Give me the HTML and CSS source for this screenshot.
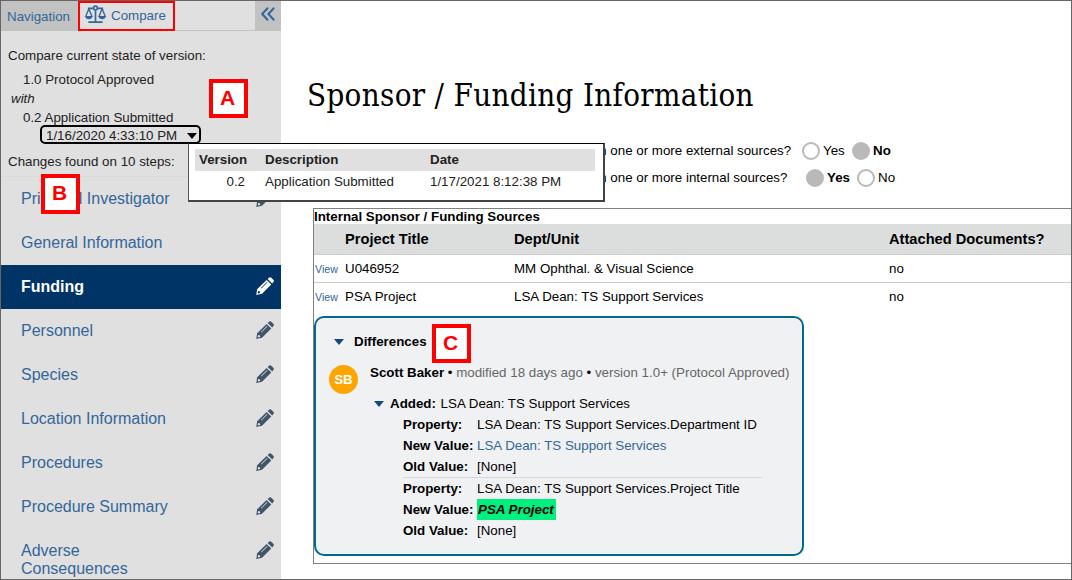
FILE: index.html
```html
<!DOCTYPE html>
<html lang="en">
<head>
    <meta charset="UTF-8">
    <meta name="viewport" content="width=device-width, initial-scale=1.0">
    <title>Sponsor / Funding Information</title>
    <link rel="stylesheet" href="styles.css">
</head>
<body>
    <!-- Shared icons -->
    <svg class="icon-defs" width="0" height="0">
        <symbol id="pencil" viewBox="0 0 18 18">
            <path fill-rule="evenodd" d="M10.6 2.9L15.3 7.4L6 16.8L.3 18L1.1 12.3ZM2.3 14L1.7 15.7L2.6 16.4L4.2 15.7L4 14.4L2.7 14ZM10.9 5.1L5 11L5.5 11.5L11.4 5.6Z" />
            <path d="M11.6 2L13.3 .5Q14.2 -.2 15 .6L17.6 3Q18.3 3.8 17.6 4.7L16.2 6.4Z" />
        </symbol>
    </svg>

    <div class="page">
        <aside class="sidebar">
            <div class="tabs">
                <a class="tab">Navigation</a>
                <a class="tab tab-active">
                    <svg class="scale-icon" viewBox="0 0 24 20" fill="none" stroke="currentColor" stroke-width="1.7">
                        <path d="M4 3.5H9.5M14.5 3.5H20M12 5.5V17.5M4.5 18H19.5" />
                        <circle cx="12" cy="3.2" r="2" />
                        <path d="M5 4L1.7 12M5 4L8.3 12M19 4L15.7 12M19 4L22.3 12" stroke-width="1.4" />
                        <path d="M.8 11.7H9.2Q8.5 15 5 15T.8 11.7ZM14.8 11.7H23.2Q22.5 15 19 15T14.8 11.7Z" fill="currentColor" stroke="none" />
                    </svg>
                    Compare
                </a>
                <span class="tab-fill"></span>
                <a class="collapse">
                    <svg viewBox="0 0 14 14" fill="none" stroke="currentColor" stroke-width="2">
                        <path d="M7 .8L1.2 7L7 13.2M13.2 .8L7.4 7L13.2 13.2" />
                    </svg>
                </a>
            </div>

            <div class="compare">
                <p class="compare-title">Compare current state of version:</p>
                <p class="version">1.0 Protocol Approved</p>
                <p class="with">with</p>
                <p class="version">0.2 Application Submitted</p>
                <div class="date-select">
                    <span>1/16/2020 4:33:10 PM</span>
                    <span class="caret"></span>
                </div>
                <p class="changes">Changes found on 10 steps:</p>
            </div>

            <ul class="steps">
                <li><span>Principal Investigator</span><svg><use href="#pencil" /></svg></li>
                <li><span>General Information</span></li>
                <li class="current"><span>Funding</span><svg><use href="#pencil" /></svg></li>
                <li><span>Personnel</span><svg><use href="#pencil" /></svg></li>
                <li><span>Species</span><svg><use href="#pencil" /></svg></li>
                <li><span>Location Information</span><svg><use href="#pencil" /></svg></li>
                <li><span>Procedures</span><svg><use href="#pencil" /></svg></li>
                <li><span>Procedure Summary</span><svg><use href="#pencil" /></svg></li>
                <li><span>Adverse Consequences</span><svg><use href="#pencil" /></svg></li>
            </ul>
        </aside>

        <main class="content">
            <h1>Sponsor / Funding Information</h1>

            <div class="questions">
                <div class="question">
                    <span class="label">from one or more external sources?</span>
                    <span class="radio"></span><span class="option">Yes</span>
                    <span class="radio checked"></span><b class="option">No</b>
                </div>
                <div class="question internal">
                    <span class="label">from one or more internal sources?</span>
                    <span class="radio checked"></span><b class="option">Yes</b>
                    <span class="radio"></span><span class="option">No</span>
                </div>
            </div>

            <section class="sources">
                <h2>Internal Sponsor / Funding Sources</h2>
                <div class="row head">
                    <span></span>
                    <span>Project Title</span>
                    <span>Dept/Unit</span>
                    <span>Attached Documents?</span>
                </div>
                <div class="row">
                    <a>View</a>
                    <span>U046952</span>
                    <span>MM Ophthal. &amp; Visual Science</span>
                    <span>no</span>
                </div>
                <div class="row last">
                    <a>View</a>
                    <span>PSA Project</span>
                    <span>LSA Dean: TS Support Services</span>
                    <span>no</span>
                </div>

                <div class="differences">
                    <div class="diff-title"><span class="caret blue"></span>Differences</div>
                    <div class="diff-entry">
                        <span class="avatar">SB</span>
                        <div class="diff-body">
                            <p class="author"><b>Scott Baker</b> • <span>modified 18 days ago</span> • <span>version 1.0+ (Protocol Approved)</span></p>
                            <p class="added"><span class="caret blue"></span><b>Added:</b>&nbsp;LSA Dean: TS Support Services</p>
                            <dl>
                                <dt>Property:</dt>
                                <dd>LSA Dean: TS Support Services.Department ID</dd>
                                <dt>New Value:</dt>
                                <dd><a>LSA Dean: TS Support Services</a></dd>
                                <dt>Old Value:</dt>
                                <dd>[None]</dd>
                            </dl>
                            <dl class="second">
                                <dt>Property:</dt>
                                <dd>LSA Dean: TS Support Services.Project Title</dd>
                                <dt>New Value:</dt>
                                <dd><mark>PSA Project</mark></dd>
                                <dt>Old Value:</dt>
                                <dd>[None]</dd>
                            </dl>
                        </div>
                    </div>
                </div>
            </section>
        </main>

        <!-- Version dropdown -->
        <div class="version-menu">
            <div class="version-row version-head">
                <span>Version</span><span>Description</span><span>Date</span>
            </div>
            <div class="version-row">
                <span>0.2</span><span>Application Submitted</span><span>1/17/2021 8:12:38 PM</span>
            </div>
        </div>

        <div class="marker marker-a">A</div>
        <div class="marker marker-b">B</div>
        <div class="marker marker-c">C</div>
    </div>
</body>
</html>
```
FILE: styles.css
```css
:root {
    --link-color: #336699;
    --navy: #003366;
    --sidebar: #e0e0e0;
    --tab: #c2c2c2;
}

* {
    margin: 0;
    padding: 0;
    box-sizing: border-box;
}

body {
    font-family: "Liberation Sans", Arial, sans-serif;
    font-size: 13.33px;
    line-height: 18px;
    color: #000;
    background: #fff;
}

.icon-defs {
    position: absolute;
}

.page {
    position: relative;
    display: flex;
    width: 1072px;
    height: 580px;
    border: 1px solid #666;
    overflow: hidden;
}

/* Sidebar */
.sidebar {
    flex: 0 0 280px;
    background: var(--sidebar);
    color: #222;
}

.tabs {
    display: flex;
    height: 30px;
    background: var(--tab);
    color: var(--link-color);
}

.tab {
    display: flex;
    align-items: center;
    width: 77px;
    padding: 2px 0 0 6px;
}

.tab-active {
    width: 97px;
    padding: 0 0 1px 4px;
    gap: 4px;
    background: var(--sidebar);
    border: 2px solid #f00;
}

.scale-icon {
    width: 23px;
    height: 19px;
    margin-top: -2px;
}

.tab-fill {
    width: 80px;
    height: 29px;
    background: var(--sidebar);
}

.collapse {
    padding: 6px 0 0 6px;
}

.collapse svg {
    display: block;
    width: 14px;
    height: 14px;
}

.compare {
    height: 146px;
    padding: 16px 7px 0;
    border-bottom: 1px solid #d9d9d9;
}

.compare-title {
    margin-bottom: 5px;
}

.version {
    padding-left: 15px;
    line-height: 19px;
}

.with {
    padding-left: 3px;
    line-height: 19px;
    font-style: italic;
}

.date-select {
    display: flex;
    align-items: center;
    justify-content: space-between;
    width: 161px;
    height: 19px;
    margin: -2px 0 9px 32px;
    padding: 3px 2px 0 4px;
    border: 2px solid #000;
    border-radius: 5px;
}

.caret {
    border: 5.5px solid transparent;
    border-top: 6px solid #000;
    border-bottom: 0;
}

.caret.blue {
    border-top-color: #114a80;
}

.steps {
    list-style: none;
    font-size: 16px;
    color: var(--link-color);
}

.steps li {
    display: flex;
    justify-content: space-between;
    min-height: 44px;
    padding: 13px 7px 0 20px;
}

.steps span {
    max-width: 155px;
}

.steps svg {
    width: 18px;
    height: 18px;
    margin-top: -1px;
    fill: #40566b;
}

.steps .current {
    background: var(--navy);
    color: #fff;
    font-weight: bold;
}

.steps .current svg {
    fill: #fff;
}

/* Main content */
.content {
    flex: 1;
    padding-top: 74px;
}

h1 {
    height: 63px;
    padding-left: 26px;
    font: 31px/40px "DejaVu Serif Condensed", "DejaVu Serif", serif;
    font-stretch: condensed;
    letter-spacing: 0.33px;
    white-space: nowrap;
}

.questions {
    height: 70px;
    padding-left: 299px;
}

.question {
    display: flex;
    align-items: center;
    height: 26px;
    margin-bottom: 1px;
}

.label {
    width: 222px;
    white-space: nowrap;
}

.internal .label {
    width: 226px;
}

.radio {
    width: 18px;
    height: 18px;
    border: 2px solid #b9b9b9;
    border-radius: 50%;
}

.radio.checked {
    background: #b9b9b9;
}

.option {
    width: 32px;
    padding-left: 3px;
}

.internal .option {
    width: 33px;
}

.sources {
    height: 356px;
    margin-left: 32px;
    border: 1px solid #808080;
    border-right: 0;
}

h2 {
    height: 15px;
    font-size: 13.33px;
    line-height: 15px;
}

.row {
    display: grid;
    grid-template-columns: 31px 169px 375px 1fr;
    align-items: center;
    height: 28px;
    border-bottom: 1px solid #ccc;
}

.row.head {
    height: 31px;
    font-size: 14.67px;
    font-weight: bold;
    background: #dcdedd;
}

.row.last {
    border-bottom: 0;
}

.row a {
    padding-left: 1px;
    font-size: 10.67px;
}

a {
    color: var(--link-color);
}

.differences {
    width: 490px;
    height: 240px;
    margin-top: 5px;
    padding: 15px 12px 0 14px;
    background: #f0f1f3;
    border: 2px solid #00698c;
    border-radius: 10px;
}

.diff-title {
    display: flex;
    align-items: center;
    gap: 10px;
    padding-left: 4px;
    font-weight: bold;
}

.diff-entry {
    display: flex;
    gap: 12px;
    margin-top: 13px;
}

.avatar {
    flex: 0 0 29px;
    height: 29px;
    margin: 1px 0 0 -1px;
    border-radius: 50%;
    background: #ffa500;
    color: #fff;
    font-weight: bold;
    line-height: 29px;
    text-align: center;
}

.author {
    white-space: nowrap;
}

.author span {
    color: #666;
}

.added {
    display: flex;
    align-items: center;
    margin: 11px 0 0 4px;
    line-height: 21px;
}

.added .caret {
    margin-right: 6px;
}

.added b {
    margin-right: 1px;
}

dl {
    display: grid;
    grid-template-columns: 74px 1fr;
    width: 359px;
    margin-left: 33px;
    line-height: 21px;
}

dl.second {
    border-top: 1px solid #d6d6d6;
}

dt {
    font-weight: bold;
}

mark {
    display: block;
    width: 79px;
    padding-left: 1px;
    background: #00f080;
    color: #000;
    font-style: italic;
    font-weight: bold;
}

/* Overlays */
.version-menu {
    position: absolute;
    left: 187px;
    top: 142px;
    width: 417px;
    height: 59px;
    padding: 5px 8px 5px 6px;
    background: #fff;
    color: #222;
    border: 1px solid #555;
    border-top-color: #000;
    border-right: 2px solid #444;
    border-bottom: 2px solid #444;
}

.version-row {
    display: grid;
    grid-template-columns: 50px 185px 1fr;
    height: 22px;
    line-height: 22px;
}

.version-row span:first-child {
    padding-left: 4px;
    white-space: nowrap;
}

.version-row:not(.version-head) span:first-child {
    padding: 0;
    text-align: right;
}

.version-row span:nth-child(2) {
    padding-left: 20px;
}

.version-head {
    background: var(--sidebar);
    font-weight: bold;
}

.marker {
    position: absolute;
    width: 39px;
    height: 39px;
    padding-right: 2px;
    border: 4px solid #f00;
    background: #fff;
    color: #f00;
    font-size: 21px;
    font-weight: bold;
    line-height: 30px;
    text-align: center;
}

.marker-a {
    left: 208px;
    top: 78px;
}

.marker-b {
    left: 40px;
    top: 173px;
    height: 40px;
}

.marker-c {
    left: 431px;
    top: 323px;
}
```
